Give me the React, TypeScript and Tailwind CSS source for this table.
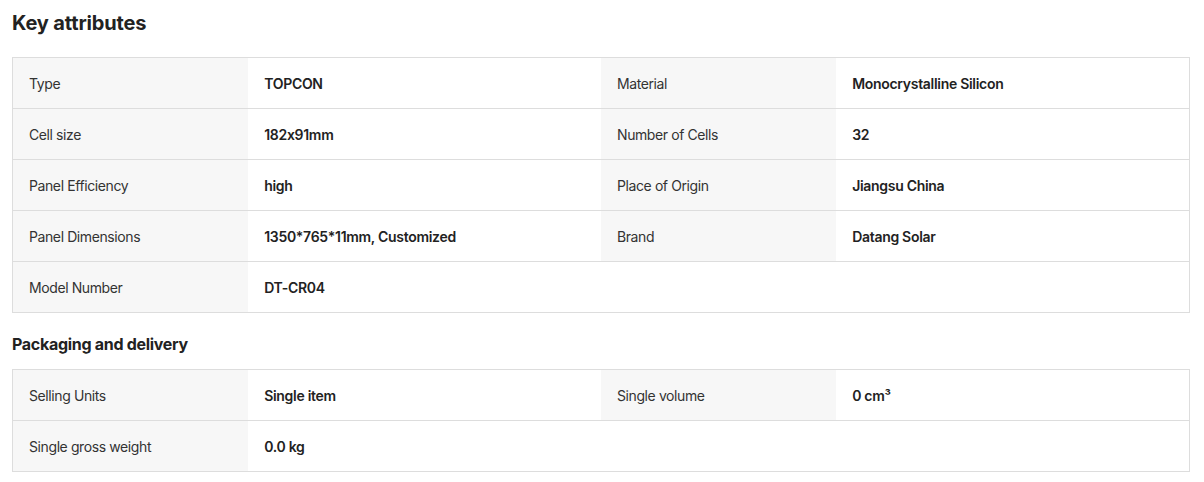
import React from "react";

const key: React.ReactNode[][] = [
  ["Type", "TOPCON", "Material", "Monocrystalline Silicon"],
  ["Cell size", "182x91mm", "Number of Cells", "32"],
  ["Panel Efficiency", "high", "Place of Origin", "Jiangsu China"],
  ["Panel Dimensions", "1350*765*11mm, Customized", "Brand", "Datang Solar"],
  ["Model Number", "DT-CR04"],
];

const labelCls = "bg-[#f7f7f7] flex items-center pl-4 text-[14px] tracking-[-0.4px] text-[#333333]";
const valueCls = "flex items-center pl-4 text-[14px] tracking-[-0.3px] font-semibold text-[#222222]";

function Table({ rows }: { rows: React.ReactNode[][] }) {
  return (
    <div className="border border-[#dddddd]">
      {rows.map((r, i) => (
        <div
          key={i}
          className={`grid grid-cols-[20%_30%_20%_30%] ${i < rows.length - 1 ? "h-[51px] border-b border-[#dddddd]" : "h-[50px]"}`}
        >
          <div className={labelCls}>{r[0]}</div>
          <div className={valueCls}>{r[1]}</div>
          {r[2] !== undefined ? <div className={labelCls}>{r[2]}</div> : <div />}
          {r[3] !== undefined ? <div className={valueCls}>{r[3]}</div> : <div />}
        </div>
      ))}
    </div>
  );
}

export default function App() {
  return (
    <div className="w-[1204px] h-[482px] bg-white px-3 pt-[9px] font-['Inter',_'Liberation_Sans',_sans-serif] [font-feature-settings:'calt'_0]">
      <div className="w-[1178px]">
        <h2 className="text-[20px] leading-[28px] font-bold tracking-[-0.15px] text-[#222222]">Key attributes</h2>
        <div className="mt-[20px]">
          <Table rows={key} />
        </div>
        <h3 className="mt-[19px] text-[16px] leading-[24px] font-bold tracking-[-0.3px] text-[#222222]">Packaging and delivery</h3>
        <div className="mt-[13px]">
          <Table
            rows={[
              ["Selling Units", "Single item", "Single volume", <span key="v">0 cm³</span>],
              ["Single gross weight", "0.0 kg"],
            ]}
          />
        </div>
      </div>
    </div>
  );
}
